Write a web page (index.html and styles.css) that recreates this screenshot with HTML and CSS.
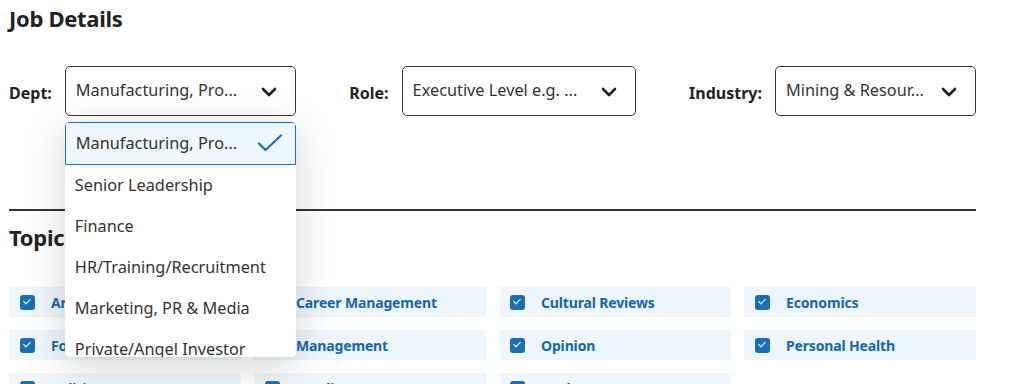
FILE: index.html
```html
<!DOCTYPE html>
<html lang="en">

<head>
    <meta charset="UTF-8">
    <meta name="viewport" content="width=device-width, initial-scale=1.0">
    <title>Job Details</title>
    <link rel="stylesheet" href="styles.css">
</head>

<body>
    <div class="container">
        <h2 class="title">Job Details</h2>
        <div class="filters">
            <div class="filter">
                <span class="filter__label">Dept:</span>
                <div class="select select--dept">
                    <span class="select__value">Manufacturing, Pro...</span>
                    <svg class="select__chevron" width="16" height="10" viewBox="0 0 16 10"><path d="M2 2l6 6 6-6" fill="none" stroke="#222" stroke-width="2.6" stroke-linecap="round" stroke-linejoin="round"/></svg>
                    <ul class="menu">
                        <li class="menu__item menu__item--selected">
                            <span>Manufacturing, Pro...</span>
                            <svg width="26" height="18" viewBox="0 0 26 18"><path d="M2 9.5l6.5 6.5L24 1.5" fill="none" stroke="#1a6fc0" stroke-width="2.2" stroke-linecap="round" stroke-linejoin="round"/></svg>
                        </li>
                        <li class="menu__item">Senior Leadership</li>
                        <li class="menu__item">Finance</li>
                        <li class="menu__item">HR/Training/Recruitment</li>
                        <li class="menu__item">Marketing, PR &amp; Media</li>
                        <li class="menu__item">Private/Angel Investor</li>
                        <li class="menu__item">Public Sector</li>
                    </ul>
                </div>
            </div>
            <div class="filter">
                <span class="filter__label">Role:</span>
                <div class="select select--role">
                    <span class="select__value">Executive Level e.g. ...</span>
                    <svg class="select__chevron" width="16" height="10" viewBox="0 0 16 10"><path d="M2 2l6 6 6-6" fill="none" stroke="#222" stroke-width="2.6" stroke-linecap="round" stroke-linejoin="round"/></svg>
                </div>
            </div>
            <div class="filter">
                <span class="filter__label">Industry:</span>
                <div class="select select--industry">
                    <span class="select__value">Mining &amp; Resour...</span>
                    <svg class="select__chevron" width="16" height="10" viewBox="0 0 16 10"><path d="M2 2l6 6 6-6" fill="none" stroke="#222" stroke-width="2.6" stroke-linecap="round" stroke-linejoin="round"/></svg>
                </div>
            </div>
        </div>

        <hr class="divider">

        <h2 class="title title--topics">Topics</h2>
        <div class="topics">
            <label class="topic"><span class="topic__box"></span>Arts</label>
            <label class="topic"><span class="topic__box"></span>Career Management</label>
            <label class="topic"><span class="topic__box"></span>Cultural Reviews</label>
            <label class="topic"><span class="topic__box"></span>Economics</label>
            <label class="topic"><span class="topic__box"></span>Food</label>
            <label class="topic"><span class="topic__box"></span>Management</label>
            <label class="topic"><span class="topic__box"></span>Opinion</label>
            <label class="topic"><span class="topic__box"></span>Personal Health</label>
            <label class="topic"><span class="topic__box"></span>Politics</label>
            <label class="topic"><span class="topic__box"></span>Reading</label>
            <label class="topic"><span class="topic__box"></span>Real Estate</label>
        </div>
    </div>
</body>

</html>
```

FILE: styles.css
```css
body {
    margin: 0;
    background-color: #fff;
    font-family: 'Noto Sans', sans-serif;
    color: #222;
}

.container {
    width: 967px;
    margin-left: 9px;
}

.title {
    margin: 0;
    padding-top: 4px;
    font-size: 22px;
    font-weight: 700;
    line-height: 28px;
    letter-spacing: -0.3px;
    color: #222;
}

.filters {
    display: flex;
    align-items: center;
    justify-content: space-between;
    margin-top: 34px;
}

.filter {
    display: flex;
    align-items: center;
    gap: 13px;
}

.filter__label {
    font-size: 16px;
    font-weight: 700;
    padding-top: 4px;
}

.select {
    position: relative;
    box-sizing: border-box;
    height: 50px;
    border: 1px solid #333;
    border-radius: 5px;
    display: flex;
    align-items: center;
    justify-content: space-between;
    padding: 0 18px 0 10px;
    font-size: 16.3px;
    color: #333;
}

.select--dept {
    width: 231px;
}

.select--role {
    width: 234px;
}

.select--industry {
    width: 201px;
}

.select__value {
    white-space: nowrap;
    padding-bottom: 2px;
}

.select__chevron {
    margin-top: 2px;
}

.menu {
    position: absolute;
    top: 55px;
    left: -1px;
    width: 231px;
    height: 235px;
    box-sizing: border-box;
    margin: 0;
    padding: 0;
    list-style: none;
    overflow: hidden;
    background: #fff;
    border-radius: 5px;
    box-shadow: 0 8px 40px rgba(0, 0, 0, 0.18);
    z-index: 2;
}

.menu__item {
    height: 41px;
    display: flex;
    align-items: center;
    padding: 0 10px 2px;
    box-sizing: border-box;
    font-size: 16.3px;
    color: #333;
    white-space: nowrap;
}

.menu__item--selected {
    height: 43px;
    justify-content: space-between;
    padding-right: 12px;
    background-color: #eef7fd;
    border: 1px solid #1a6fc0;
    border-radius: 3px 3px 0 0;
    padding-left: 10px;
}

.divider {
    margin: 93px 0 0;
    border: none;
    border-top: 2px solid #333;
}

.title--topics {
    padding-top: 12px;
}

.topics {
    display: grid;
    grid-template-columns: repeat(4, 1fr);
    column-gap: 13px;
    row-gap: 13px;
    margin-top: 36px;
}

.topic {
    height: 30px;
    display: flex;
    align-items: center;
    gap: 16px;
    padding-left: 11px;
    background-color: #eef6fc;
    font-size: 14px;
    font-weight: 700;
    letter-spacing: -0.15px;
    color: #1668b0;
}

.topic__box {
    position: relative;
    width: 15px;
    height: 15px;
    border-radius: 3px;
    background-color: #1a6fb3;
}

.topic__box::after {
    content: '';
    position: absolute;
    left: 5px;
    top: 2.5px;
    width: 3px;
    height: 6px;
    border: solid #fff;
    border-width: 0 1.5px 1.5px 0;
    transform: rotate(45deg);
}
```
